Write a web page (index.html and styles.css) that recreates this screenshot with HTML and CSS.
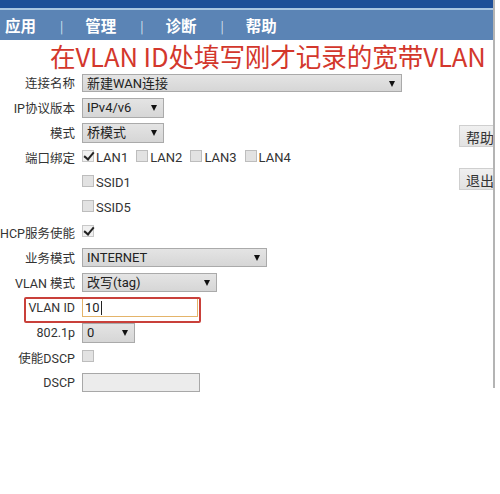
FILE: index.html
```html
<!DOCTYPE html>
<html lang="zh-CN">
<head>
<meta charset="utf-8">
<title>WAN</title>
<link rel="stylesheet" href="styles.css">
</head>
<body>
<div class="screen">
  <div class="main">
    <div class="topband"></div>
    <nav class="nav">
      <span class="nav-item">应用</span><span class="sep">|</span>
      <span class="nav-item">管理</span><span class="sep">|</span>
      <span class="nav-item">诊断</span><span class="sep">|</span>
      <span class="nav-item">帮助</span>
    </nav>
    <div class="note">在VLAN ID处填写刚才记录的宽带VLAN</div>
    <div class="content">
      <div class="form">
        <div class="label">连接名称</div>
        <div class="ctl"><div class="select w-name">新建WAN连接<span class="arrow"></span></div></div>

        <div class="label">IP协议版本</div>
        <div class="ctl"><div class="select w-ip">IPv4/v6<span class="arrow"></span></div></div>

        <div class="label">模式</div>
        <div class="ctl"><div class="select w-ip">桥模式<span class="arrow"></span></div></div>

        <div class="label">端口绑定</div>
        <div class="ctl checks">
          <span class="chk-item"><span class="cb on"></span>LAN1</span>
          <span class="chk-item"><span class="cb"></span>LAN2</span>
          <span class="chk-item"><span class="cb"></span>LAN3</span>
          <span class="chk-item"><span class="cb"></span>LAN4</span>
        </div>

        <div class="label"></div>
        <div class="ctl checks"><span class="chk-item"><span class="cb"></span>SSID1</span></div>

        <div class="label"></div>
        <div class="ctl checks"><span class="chk-item"><span class="cb"></span>SSID5</span></div>

        <div class="label">DHCP服务使能</div>
        <div class="ctl"><span class="cb on"></span></div>

        <div class="label">业务模式</div>
        <div class="ctl"><div class="select w-svc">INTERNET<span class="arrow"></span></div></div>

        <div class="label">VLAN 模式</div>
        <div class="ctl"><div class="select w-vmode">改写(tag)<span class="arrow"></span></div></div>

        <div class="label hl-row"><span class="highlight"></span>VLAN ID</div>
        <div class="ctl"><div class="input active">10<span class="caret"></span></div></div>

        <div class="label">802.1p</div>
        <div class="ctl"><div class="select w-p">0<span class="arrow"></span></div></div>

        <div class="label">使能DSCP</div>
        <div class="ctl"><span class="cb"></span></div>

        <div class="label">DSCP</div>
        <div class="ctl"><div class="input disabled"></div></div>
      </div>
      <div class="side">
        <div class="btn">帮助</div>
        <div class="btn">退出</div>
      </div>
    </div>
  </div>
  <div class="scroll"></div>
</div>
</body>
</html>
```

FILE: styles.css
```css
html, body {
  margin: 0;
  padding: 0;
  background: #ffffff;
}

body {
  font-family: Roboto, "Noto Sans CJK SC", sans-serif;
  color: #333;
  width: 500px;
  height: 494px;
  overflow: hidden;
}

.screen {
  display: flex;
  align-items: flex-start;
}

.main {
  width: 493px;
  overflow: hidden;
  flex: none;
}

.scroll {
  width: 2px;
  height: 388px;
  background: #b4b4b4;
  flex: none;
}

.topband {
  height: 8px;
  background: #1d4f98;
  border-bottom: 2px solid #a9c6e2;
}

.nav {
  height: 30px;
  background: #5b84b5;
  display: flex;
  align-items: center;
  padding-left: 5px;
  color: #fff;
  font-family: "Noto Sans CJK SC", sans-serif;
  font-weight: 700;
  font-size: 15.5px;
}

.nav-item {
  width: 32px;
}

.sep {
  font-weight: 400;
  font-size: 12px;
  margin: 0 22px 0 23px;
  color: #dce6f2;
}

.note {
  height: 30px;
  line-height: 32px;
  padding-left: 50px;
  font-family: "Noto Sans CJK SC", sans-serif;
  font-size: 25.6px;
  color: #d3372c;
  white-space: nowrap;
  letter-spacing: -0.1px;
}

.content {
  display: flex;
  align-items: flex-start;
}

.form {
  display: grid;
  grid-template-columns: 75px auto;
  grid-auto-rows: 25px;
  column-gap: 7px;
  width: 459px;
  flex: none;
}

.label {
  display: flex;
  justify-content: flex-end;
  align-items: center;
  white-space: nowrap;
  font-size: 12.5px;
  color: #333;
  position: relative;
}

.ctl {
  display: flex;
  align-items: center;
  font-size: 13px;
}

.select {
  box-sizing: border-box;
  position: relative;
  height: 19px;
  line-height: 17px;
  padding-left: 4px;
  background: linear-gradient(#e4e4e4, #d6d6d6);
  border: 1px solid #aaa;
  color: #222;
  font-size: 13px;
}

.arrow {
  position: absolute;
  right: 6px;
  top: 6px;
  width: 0;
  height: 0;
  border-left: 3.5px solid transparent;
  border-right: 3.5px solid transparent;
  border-top: 6px solid #111;
}

.w-name { width: 320px; height: 18px; }
.w-ip { width: 82px; height: 20px; }
.w-svc { width: 185px; }
.w-vmode { width: 135px; }
.w-p { width: 53px; height: 20px; }

.input {
  box-sizing: border-box;
  height: 19px;
  line-height: 17px;
  padding-left: 2px;
  font-size: 13px;
  color: #222;
  display: flex;
  align-items: center;
}

.input.active {
  width: 116px;
  border: 1px solid #e4b46a;
  background: #fff;
}

.caret {
  width: 1px;
  height: 14px;
  background: #222;
  margin-left: 1px;
}

.input.disabled {
  width: 118px;
  border: 1px solid #a8a8a8;
  background: #ececec;
}

.highlight {
  position: absolute;
  left: 24px;
  top: 2px;
  width: 173px;
  height: 22px;
  border: 2px solid #c9403a;
  border-radius: 2px;
  box-sizing: content-box;
}

.checks {
  gap: 8px;
}

.chk-item {
  display: flex;
  align-items: flex-end;
  font-size: 13px;
  color: #333;
  line-height: 14px;
}

.cb {
  display: inline-block;
  box-sizing: border-box;
  width: 12px;
  height: 12px;
  border: 1px solid #bdbdbd;
  background: #e2e2e2;
  position: relative;
  margin-right: 2px;
  margin-bottom: 3px;
}

.cb.on {
  background: #f0f0f0;
  border-color: #c8c8c8;
}

.cb.on::after {
  content: "";
  position: absolute;
  left: 3px;
  top: -1px;
  width: 4px;
  height: 8px;
  border-right: 2.5px solid #222;
  border-bottom: 2.5px solid #222;
  transform: rotate(40deg);
}

.side {
  display: flex;
  flex-direction: column;
  gap: 21px;
  margin-top: 55px;
  flex: none;
}

.btn {
  width: 42px;
  height: 22px;
  line-height: 22px;
  box-sizing: border-box;
  padding-left: 6px;
  background: linear-gradient(#f0f0f0, #e2e2e2);
  border: 1px solid #cfcfcf;
  font-family: "Noto Sans CJK SC", sans-serif;
  font-size: 14px;
  color: #333;
}
```
